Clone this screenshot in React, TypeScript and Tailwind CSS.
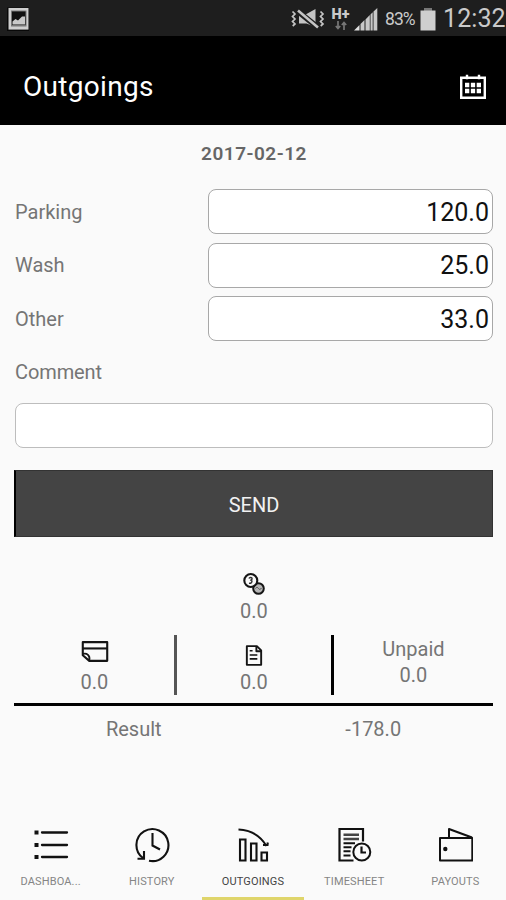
import { useState, type ReactNode } from "react";

interface Expense {
  id: string;
  label: string;
  value: string;
}

interface Tab {
  id: string;
  label: string;
  icon: ReactNode;
}

const initialExpenses: Expense[] = [
  { id: "parking", label: "Parking", value: "120.0" },
  { id: "wash", label: "Wash", value: "25.0" },
  { id: "other", label: "Other", value: "33.0" },
];

function PictureIcon() {
  return (
    <svg width="22" height="24" viewBox="0 0 22 24">
      <path d="M0 .5h22v23.500H0z" fill="#080808" />
      <path d="M1.500 1h20v21.600h-20z" fill="#cfcfcf" />
      <path d="M4 3.500h15.500v16H4z" fill="#777" />
      <path d="M5 4.500h13.500v13.500H5z" fill="#111" />
      <path d="M5.500 17.500v-3l3-2.500 2.500 1.500 4-4h3v8z" fill="#c9c9c9" />
    </svg>
  );
}

function MuteIcon() {
  return (
    <svg width="34" height="22" viewBox="0 0 34 22" fill="none" stroke="#c4c4c4">
      <path d="M1.500 3.500l2.500 2.500-2.500 2.500 2.500 2.500-2.500 2.500 2.500 2.500-2.300 2" strokeWidth="1.700" />
      <path d="M29.500 3.500l2.500 2.500-2.500 2.500 2.500 2.500-2.500 2.500 2.500 2.500-2.300 2" strokeWidth="1.700" />
      <path d="M8 6h7.500L24.500 1v18L15.500 15.500H8z" fill="#c4c4c4" stroke="none" />
      <path d="M6.500 3L27 19.500" stroke="#1e1e1e" strokeWidth="5.500" />
      <path d="M7 2.500L27 19.500" strokeWidth="2.600" />
    </svg>
  );
}

function SignalIcon() {
  return (
    <svg width="24" height="23" viewBox="0 0 24 23" fill="#c8c8c8">
      <path d="M0 22.500L5.500 17v5.500z" fill="#e0e0e0" />
      <path d="M6.500 22.500V16l4-4v10.500zM11.500 22.500V11.500l4.300-4.500v15.500zM16.500 22.500V6.500l2.200-2.200v18.200zM19.500 22.500V3.500L23.300 0v22.500z" />
    </svg>
  );
}

function StatusBar() {
  return (
    <div className="flex h-[35.500px] items-center justify-between bg-[#1e1e1e] pl-[7px] text-[#cacaca]">
      <div className="pt-[3px]">
        <PictureIcon />
      </div>
      <div className="flex h-full items-center pt-[3px]">
        <MuteIcon />
        <div className="ml-[6px] flex w-[19px] flex-col items-center">
          <span className="text-[14.500px] leading-[13px] font-black">H+</span>
          <svg width="12" height="9" viewBox="0 0 12 9" fill="none" stroke="#777" strokeWidth="1.700">
            <path d="M3 0v7M.8 5L3 7.500 5.200 5M9 9V1.500M6.800 4L9 1.500 11.200 4" />
          </svg>
        </div>
        <div className="ml-[4px]">
          <SignalIcon />
        </div>
        <span className="ml-[7px] w-[31px] text-[17.500px] tracking-[-0.900px]">83%</span>
        <svg className="ml-[4px]" width="16" height="23" viewBox="0 0 16 23">
          <path d="M4 0h8v3H4z" fill="#777" />
          <path d="M.5 2.500h15V22.500H.5z" fill="#cfcfcf" />
        </svg>
        <span className="ml-[7px] w-[63px] text-[25px] tracking-[0.100px] whitespace-nowrap">12:32</span>
      </div>
    </div>
  );
}

function CalendarIcon() {
  return (
    <svg width="28" height="26" viewBox="0 0 28 26" fill="none" stroke="#fff">
      <path d="M2.200 3.700h23.600v20.100H2.200z" strokeWidth="2.400" />
      <path d="M8 .8v4.500M20 .8v4.500" strokeWidth="2.400" />
      <path d="M6 11h16M6 17h16" strokeWidth="4.300" strokeDasharray="4.300 1.550" />
    </svg>
  );
}

function CoinsIcon() {
  return (
    <svg width="24" height="24" viewBox="0 0 24 24" fill="none" stroke="#151515">
      <circle cx="16.500" cy="16.500" r="5.300" fill="#b5b5b5" strokeWidth="2" />
      <path d="M13.500 16.500c1-1.500 2-1.500 3 0s2 1 3-.5" strokeWidth="1" stroke="#555" />
      <circle cx="8.800" cy="8.500" r="6.500" fill="#fafafa" strokeWidth="2.100" />
      <path d="M7 6.500c.5-1.500 3.200-1.500 3 .3-.2 1.400-1.400 1-1.400 2M10 8.500c0 2.500-1.200 3-3 2.700" strokeWidth="1.500" stroke="#333" />
    </svg>
  );
}

function CardIcon() {
  return (
    <svg width="28" height="22" viewBox="0 0 28 22" fill="none" stroke="#151515" strokeWidth="2.200" strokeLinejoin="round">
      <path d="M1.200 15V1.200h25.600v19.600H8L1.200 15z" />
      <path d="M1.200 7.800h25.600" />
      <path d="M1.500 13.500c4-1 7.500 1.500 6.500 6.500" strokeWidth="2" />
    </svg>
  );
}

function InvoiceIcon() {
  return (
    <svg width="18" height="22" viewBox="0 0 18 22" fill="none" stroke="#151515" strokeWidth="2" strokeLinejoin="round">
      <path d="M1.500 1.200h10.500l4.500 4.500v15.100h-15z" />
      <path d="M11.500 1.500V6.500h5" />
      <path d="M4.500 6h3M4.500 10.500h8M4.500 14.500h8" strokeWidth="1.700" />
    </svg>
  );
}

const tabs: Tab[] = [
  {
    id: "dashboard",
    label: "DASHBOA...",
    icon: (
      <svg width="36" height="36" viewBox="0 0 36 36" fill="none" stroke="#111">
        <path d="M1.500 5.500h4M1.500 18h4M1.500 30h4" strokeWidth="4" />
        <path d="M9 5.500h25M9 18h25M9 30h25" strokeWidth="2.300" strokeLinecap="round" />
      </svg>
    ),
  },
  {
    id: "history",
    label: "HISTORY",
    icon: (
      <svg width="36" height="36" viewBox="0 0 36 36" fill="none" stroke="#111" strokeWidth="2.100">
        <path d="M9 31A16 16 0 1 1 15 33.700" />
        <path d="M3.500 31.800h6.500V24" />
        <path d="M18.500 6v12.500l7.500 4" />
      </svg>
    ),
  },
  {
    id: "outgoings",
    label: "OUTGOINGS",
    icon: (
      <svg width="36" height="36" viewBox="0 0 36 36" fill="none" stroke="#111" strokeWidth="2.100">
        <path d="M5 12.500h5.500V33.500H5zM16 16.500h5.500v17H16zM26.500 25.500H32v8h-5.500z" />
        <path d="M3.500 2.500c12 .5 21 5 28 16.500M28 18h4.500l.3-2.500" />
      </svg>
    ),
  },
  {
    id: "timesheet",
    label: "TIMESHEET",
    icon: (
      <svg width="36" height="36" viewBox="0 0 36 36" fill="none" stroke="#111" strokeWidth="2.200">
        <path d="M27 14.500V2H3.500v31.500h14" />
        <path d="M7.500 7.700h15.500M7.500 12h15.500" stroke="#444" strokeWidth="2.400" />
        <path d="M7.500 16.200h11.500M7.500 20.200h8M7.500 24.200h7M7.500 28.500h7" strokeWidth="1.900" />
        <circle cx="25.800" cy="25" r="8.500" strokeWidth="2" />
        <path d="M25.500 19.500v6h4.500" />
      </svg>
    ),
  },
  {
    id: "payouts",
    label: "PAYOUTS",
    icon: (
      <svg width="36" height="36" viewBox="0 0 36 36" fill="none" stroke="#111" strokeWidth="2" strokeLinejoin="round">
        <path d="M3 11h32.300v22.500H3z" />
        <path d="M12 11V2l23 8.500" />
        <circle cx="8.300" cy="22" r="2.200" fill="#111" stroke="none" />
      </svg>
    ),
  },
];

function App() {
  const [expenses, setExpenses] = useState<Expense[]>(initialExpenses);
  const [comment, setComment] = useState("");
  const [activeTab, setActiveTab] = useState("outgoings");

  const handleChange = (id: string, value: string) => {
    setExpenses((prev) => prev.map((item) => (item.id === id ? { ...item, value } : item)));
  };

  const total = expenses.reduce((sum, item) => sum + (parseFloat(item.value) || 0), 0);

  return (
    <div className="flex h-screen w-full flex-col overflow-hidden bg-[#fafafa] font-[Roboto,sans-serif] text-[20px] leading-[26px] text-[#757575]">
      <StatusBar />
      <header className="flex h-[89.500px] items-center justify-between bg-black pr-[19px] pl-[23px] pt-[14px] text-white">
        <h1 className="text-[28px] tracking-[0.300px]">Outgoings</h1>
        <button>
          <CalendarIcon />
        </button>
      </header>

      <main className="flex flex-1 flex-col pt-4 pr-[13px] pl-[15px]">
        <p className="text-center text-[19px] font-semibold tracking-[0.500px] text-[#666]">2017-02-12</p>

        <div className="mt-[22px] flex flex-col gap-[8.500px]">
          {expenses.map((item) => (
            <label key={item.id} className="flex items-center">
              <span className="w-[193px]">{item.label}</span>
              <input
                className="h-[45px] w-0 flex-1 rounded-lg border border-[#a8a8a8] bg-white pt-px pr-[3px] text-right text-[25px] text-[#111] outline-none"
                value={item.value}
                onChange={(e) => handleChange(item.id, e.target.value)}
              />
            </label>
          ))}
        </div>

        <label className="mt-[18px] flex flex-col gap-[18px]">
          <span className="tracking-[-0.100px]">Comment</span>
          <input
            className="h-[45px] rounded-lg border border-[#bdbdbd] bg-white px-2 outline-none"
            value={comment}
            onChange={(e) => setComment(e.target.value)}
          />
        </label>

        <button className="-ml-px mt-[22px] h-[67px] border border-l-2 border-[#333] border-l-black bg-[#444] pt-0.5 text-[20px] text-[#f2f2f2]">
          SEND
        </button>

        <div className="mt-[35px] flex flex-col items-center">
          <CoinsIcon />
          <span className="mt-[2px]">0.0</span>
        </div>

        <div className="mt-[11px] flex h-[60px]">
          <div className="flex flex-1 flex-col items-center pt-[6px]">
            <CardIcon />
            <span className="mt-[7px]">0.0</span>
          </div>
          <div className="w-[3px] bg-[#555]" />
          <div className="flex w-[154px] flex-col items-center pt-[10px]">
            <InvoiceIcon />
            <span className="mt-[3px]">0.0</span>
          </div>
          <div className="w-[3px] bg-black" />
          <div className="flex flex-1 flex-col items-center pt-px">
            <span>Unpaid</span>
            <span>0.0</span>
          </div>
        </div>

        <div className="-ml-px mt-2 grid grid-cols-2 border-t-[3px] border-black pt-[10px] text-center">
          <span>Result</span>
          <span>{(-total).toFixed(1)}</span>
        </div>
      </main>

      <nav className="grid h-[80px] grid-cols-5">
        {tabs.map((tab) => (
          <button
            key={tab.id}
            onClick={() => setActiveTab(tab.id)}
            className={
              tab.id === activeTab
                ? "flex flex-col items-center border-b-[3px] border-[#dfd56b] pt-[7px] text-[#444]"
                : "flex flex-col items-center border-b-[3px] border-transparent pt-[7px] text-[#858585]"
            }
          >
            {tab.icon}
            <span className="mt-[11px] text-[11px] leading-4 tracking-[0.150px]">{tab.label}</span>
          </button>
        ))}
      </nav>
    </div>
  );
}

export default App;
